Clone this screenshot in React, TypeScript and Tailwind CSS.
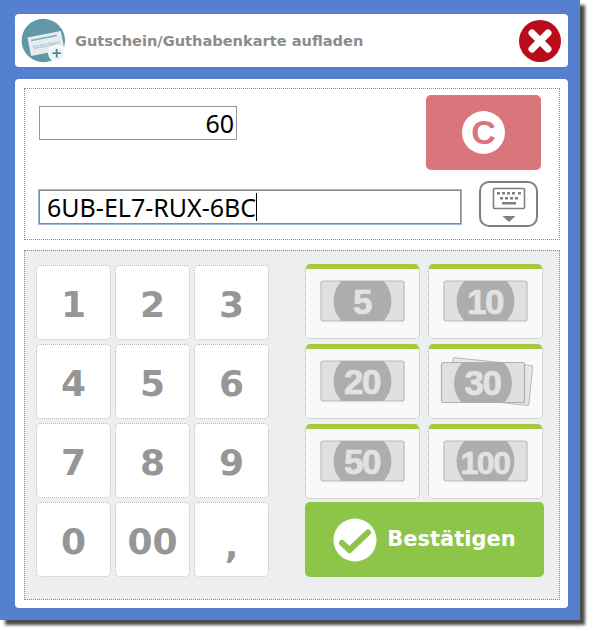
const keys = ['1', '2', '3', '4', '5', '6', '7', '8', '9', '0', '00', ','];

const BillIcon = ({ value, size = 35 }: { value: string; size?: number }) => (
  <svg width="86" height="42" viewBox="0 0 86 42" className="block">
    <defs>
      <clipPath id={`bill-${value}`}>
        <rect x="1" y="1" width="83" height="40" rx="2" />
      </clipPath>
    </defs>
    <rect x="1" y="1" width="83" height="40" rx="2" fill="#e0e0e0" stroke="#b9b9b9" strokeWidth="1.2" />
    <circle cx="42.5" cy="21" r="29" fill="#adadad" clipPath={`url(#bill-${value})`} />
    <text
      x="42"
      y="33.5"
      textAnchor="middle"
      fontFamily="'Liberation Sans', Arial, sans-serif"
      fontWeight="700"
      fontSize={size}
      fill="#e2e2e2"
      stroke="#e2e2e2"
      strokeWidth="0.7"
      letterSpacing="-1.5"
    >
      {value}
    </text>
  </svg>
);

const StackedBillIcon = ({ value }: { value: string }) => (
  <svg width="96" height="54" viewBox="0 0 96 54" className="block">
    <defs>
      <clipPath id="bill-front">
        <rect x="3.5" y="8.5" width="83" height="40" rx="2" />
      </clipPath>
    </defs>
    <rect x="13" y="7.5" width="80" height="40" rx="2" fill="#e6e6e6" stroke="#b9b9b9" transform="rotate(6 53 27.5)" />
    <rect x="3.5" y="8.5" width="83" height="40" rx="2" fill="#e0e0e0" stroke="#b0b0b0" strokeWidth="1.2" />
    <circle cx="45" cy="29" r="29" fill="#adadad" clipPath="url(#bill-front)" />
    <text
      x="44.5"
      y="41"
      textAnchor="middle"
      fontFamily="'Liberation Sans', Arial, sans-serif"
      fontWeight="700"
      fontSize="35"
      fill="#e2e2e2"
      stroke="#e2e2e2"
      strokeWidth="0.7"
      letterSpacing="-1.5"
    >
      {value}
    </text>
  </svg>
);

const BillButton = ({ children }: { children: React.ReactNode }) => (
  <button className="h-[75px] w-[115px] rounded-[5px] border border-t-0 border-dotted border-[#aaaaaa] bg-[#f9f9fa] overflow-hidden flex flex-col">
    <span className="h-[5px] w-full shrink-0 bg-[#a5c83c]" />
    <span className="flex-1 flex items-center justify-center pb-[5px]">{children}</span>
  </button>
);

const GiftCardIcon = () => (
  <svg width="46" height="46" viewBox="0 0 46 46" className="block">
    <circle cx="22.3" cy="22.5" r="21.7" fill="#6198a8" />
    <g transform="rotate(-11 25 25.5)">
      <rect x="8" y="16" width="34" height="19" fill="#e4edf0" />
      <rect x="11" y="19" width="26" height="1.4" fill="#7fabb8" />
      <text x="25" y="29" textAnchor="middle" fontFamily="'Liberation Sans', Arial, sans-serif" fontSize="6" fill="#8fb0bb">
        Gutschein
      </text>
    </g>
    <circle cx="35.7" cy="35.2" r="8.5" fill="#ffffff" />
    <circle cx="35.7" cy="35.2" r="7" fill="#eef4f6" />
    <path d="M35.7 31v8.4M31.5 35.2h8.4" stroke="#4f8799" strokeWidth="1.8" />
  </svg>
);

const CloseIcon = () => (
  <svg width="44" height="44" viewBox="0 0 44 44" className="block">
    <circle cx="22" cy="22" r="21" fill="#b90b19" />
    <path d="M14 14 L30 30 M30 14 L14 30" stroke="#ffffff" strokeWidth="7" strokeLinecap="round" />
  </svg>
);

const KeyboardIcon = () => (
  <svg width="36" height="36" viewBox="0 0 36 36" className="block">
    <rect x="2.5" y="2.5" width="31" height="20" rx="1" fill="none" stroke="#808080" strokeWidth="1.6" />
    <path d="M6 6h3v2.5h-3zM11 6h3v2.5h-3zM16 6h3v2.5h-3zM21 6h3v2.5h-3zM27 6h3v2.5h-3zM9 11h3v2.5h-3zM14 11h3v2.5h-3zM19 11h3v2.5h-3zM24 11h3v2.5h-3zM11 16h14v2.5h-14z" fill="#808080" />
    <path d="M11.5 30h13l-6.5 6z" fill="#808080" />
  </svg>
);

const CheckIcon = () => (
  <svg width="44" height="44" viewBox="0 0 44 44" className="block">
    <circle cx="22" cy="22" r="21.5" fill="#ffffff" />
    <path d="M9 25 L16.5 32 L35 14.5" fill="none" stroke="#8dc548" strokeWidth="6" strokeLinecap="round" strokeLinejoin="round" />
  </svg>
);

export default function App() {
  return (
    <div className="w-[590px] h-[630px] bg-white">
      <div className="w-[580px] h-[620px] bg-[#5580cf] pl-[15px] pr-[12px] pt-[14px] shadow-[5px_5px_3px_#4a4a4a]">
        <header className="h-[53px] bg-white rounded-[4px] flex items-center px-[6px]">
          <GiftCardIcon />
          <h1 className="ml-[8px] flex-1 text-[14.6px] font-bold text-[#8c8c8c] font-['DejaVu_Sans',sans-serif]">
            Gutschein/Guthabenkarte aufladen
          </h1>
          <CloseIcon />
        </header>

        <main className="mt-[12px] h-[529px] bg-white rounded-[4px] pt-[9px] pl-[9px] pr-[8px]">
          <section className="h-[152px] border border-dotted border-[#8a8a8a] pt-[6px] pl-[14px]">
            <div className="flex justify-between pr-[18px]">
              <div className="mt-[11px] w-[198px] h-[34px] border border-[#969696] text-right pr-[2px] text-[25px] leading-[32px] text-black font-['Noto_Sans',sans-serif]">
                60
              </div>
              <button className="w-[115px] h-[75px] rounded-[5px] bg-[#d8767b] flex items-center justify-center">
                <span className="w-[43px] h-[43px] rounded-full bg-white text-[#d8767b] flex items-center justify-center text-[34px] font-bold font-['Liberation_Sans',sans-serif]">
                  C
                </span>
              </button>
            </div>
            <div className="mt-[11px] flex items-start -ml-[1px]">
              <div className="mt-[8px] w-[424px] h-[36px] border-2 border-[#a4b6d8] outline outline-1 -outline-offset-2 outline-[#8a8a8a] pl-[7px] text-[25px] leading-[32px] text-black font-['Noto_Sans',sans-serif] flex items-center">
                <span>6UB-EL7-RUX-6BC</span>
                <span className="w-[1px] h-[28px] bg-black" />
              </div>
              <button className="ml-[17px] w-[59px] h-[46px] rounded-[10px] border-2 border-[#808080] flex items-center justify-center bg-white">
                <KeyboardIcon />
              </button>
            </div>
          </section>

          <section className="mt-[10px] h-[350px] border border-dotted border-[#8a8a8a] bg-[#edeef0] flex pl-[11px] pt-[14px]">
            <div className="grid grid-cols-[75px_75px_75px] grid-rows-[75px_75px_75px_75px] gap-[4px]">
              {keys.map((key) => (
                <button
                  key={key}
                  className={`rounded-[5px] border border-dotted border-[#b5b5b5] bg-white text-[36px] font-bold text-[#969696] font-['DejaVu_Sans',sans-serif] flex items-center justify-center ${key === ',' ? 'pt-[12px]' : 'pt-[4px]'}`}
                >
                  {key}
                </button>
              ))}
            </div>
            <div className="ml-[36px] -mt-[1px] w-[239px] flex flex-col">
              <div className="grid grid-cols-[115px_115px] gap-x-[8px] gap-y-[5px]">
                <BillButton><BillIcon value="5" /></BillButton>
                <BillButton><BillIcon value="10" /></BillButton>
                <BillButton><BillIcon value="20" /></BillButton>
                <BillButton><StackedBillIcon value="30" /></BillButton>
                <BillButton><BillIcon value="50" /></BillButton>
                <BillButton><BillIcon value="100" size={32} /></BillButton>
              </div>
              <button className="mt-[3px] h-[75px] rounded-[5px] bg-[#8dc548] flex items-center justify-center gap-[10px] text-white text-[21px] font-bold font-['DejaVu_Sans',sans-serif]">
                <CheckIcon />
                <span>Bestätigen</span>
              </button>
            </div>
          </section>
        </main>
      </div>
    </div>
  );
}
